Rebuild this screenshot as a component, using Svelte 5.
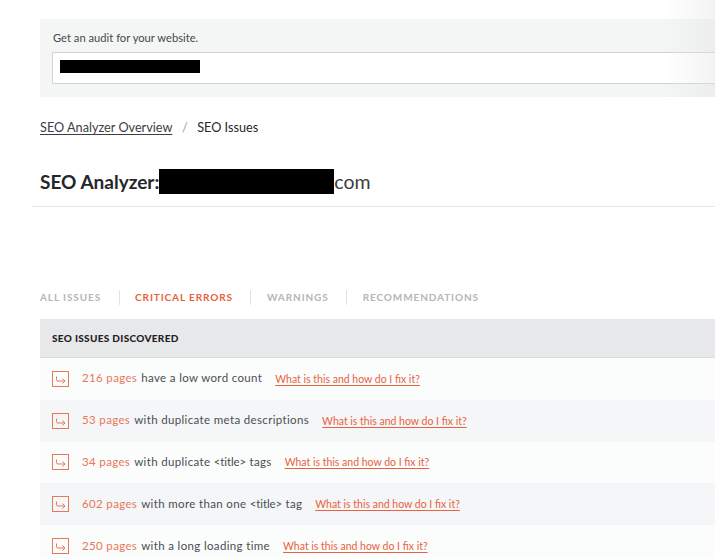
<script>
	let issues = [
		{ count: "216 pages", text: "have a low word count" },
		{ count: "53 pages", text: "with duplicate meta descriptions" },
		{ count: "34 pages", text: "with duplicate", tag: "<title>", after: "tags" },
		{ count: "602 pages", text: "with more than one", tag: "<title>", after: "tag" },
		{ count: "250 pages", text: "with a long loading time" }
	];
	let tabs = ["All Issues", "Critical Errors", "Warnings", "Recommendations"];
</script>

<style>
	:global(body) {
		margin: 0;
		background: #fff;
		overflow: hidden;
	}

	.page {
		width: 715px;
		height: 559px;
		overflow: hidden;
		position: relative;
		font-family: Lato, "Liberation Sans", sans-serif;
		color: #2b2f33;
		padding-top: 19px;
		box-sizing: border-box;
	}

	.shade {
		position: absolute;
		top: 0;
		right: 0;
		width: 50px;
		height: 97px;
		background: linear-gradient(to right, rgba(225, 225, 225, 0), rgba(225, 225, 225, 0.4));
	}

	.audit {
		margin-left: 40px;
		height: 78px;
		box-sizing: border-box;
		padding: 12px 0 0 12px;
		background: #f4f6f6;
	}

	.audit p {
		margin: 0 0 8px 1px;
		font-size: 11.2px;
		line-height: 13px;
		color: #45494d;
	}

	.field {
		height: 32px;
		box-sizing: border-box;
		background: #fff;
		border: 1px solid #d2d4d4;
		border-right: none;
		border-radius: 2px 0 0 2px;
		padding-top: 7px;
		padding-left: 7px;
	}

	.mask {
		display: block;
		background: #000;
	}

	.field .mask {
		width: 140px;
		height: 13px;
	}

	.crumbs {
		margin: 22px 0 0 40px;
		display: flex;
		align-items: center;
		height: 16px;
		font-size: 12.7px;
		color: #26292c;
	}

	.crumbs a {
		color: #3c4044;
		text-decoration: underline;
		text-underline-offset: 2px;
		text-decoration-thickness: 1px;
	}

	.crumbs .sep {
		color: #9a9d9f;
		margin: 0 9.5px;
	}

	.title {
		margin: 0 0 0 32px;
		padding: 34px 0 12px 8px;
		border-bottom: 1px solid #e6e7e7;
		display: flex;
		align-items: center;
		height: 25px;
		font-size: 19px;
		font-weight: 700;
		color: #24272a;
	}

	.title .mask {
		width: 175px;
		height: 25px;
	}

	.title .tld {
		font-weight: 400;
		font-size: 19.5px;
		color: #3a3d40;
	}

	.tabs {
		margin: 83px 0 0 40px;
		display: flex;
		align-items: center;
		height: 15px;
	}

	.tab {
		font-size: 10px;
		font-weight: 700;
		letter-spacing: 0.9px;
		text-transform: uppercase;
		color: #b4b6b8;
		padding-right: 17.5px;
		margin-right: 15.5px;
		border-right: 1px solid #e2e3e3;
		line-height: 15px;
	}

	.tab:last-child {
		border-right: none;
	}

	.tab.active {
		color: #e8603c;
	}

	.table {
		margin: 14px 0 0 40px;
	}

	.head {
		height: 39px;
		box-sizing: border-box;
		padding-left: 12px;
		display: flex;
		align-items: center;
		background: #e7e8e9;
		border-bottom: 1px solid #d9dadb;
		font-size: 10px;
		font-weight: 900;
		letter-spacing: 0.33px;
		text-transform: uppercase;
		color: #1f2225;
	}

	.row {
		height: 41.8px;
		box-sizing: border-box;
		padding: 0 0 2px 12px;
		display: flex;
		align-items: center;
		font-size: 11.5px;
		letter-spacing: 0.35px;
		color: #4a4e52;
		background: #fbfcfc;
	}

	.row:nth-child(odd) {
		background: #f5f6f7;
	}

	.icon {
		width: 17px;
		height: 16px;
		flex: none;
		margin: 2px 13px 0 0;
	}

	.count {
		color: #e8775a;
		margin-right: 4px;
	}

	.tag {
		letter-spacing: -0.1px;
	}

	.fix {
		margin: 2px 0 0 13px;
		color: #e8623f;
		letter-spacing: 0;
		font-size: 10.5px;
		text-decoration: underline;
		text-underline-offset: 2px;
	}
</style>

<div class="page">
	<div class="audit">
		<p>Get an audit for your website.</p>
		<div class="field"><span class="mask"></span></div>
	</div>

	<div class="crumbs">
		<a href="#overview">SEO Analyzer Overview</a>
		<span class="sep">/</span>
		<span>SEO Issues</span>
	</div>

	<h1 class="title">SEO Analyzer:<span class="mask"></span><span class="tld">com</span></h1>

	<div class="tabs">
		{#each tabs as tab, i}
			<span class="tab" class:active={i === 1}>{tab}</span>
		{/each}
	</div>

	<div class="table">
		<div class="head">SEO Issues Discovered</div>
		{#each issues as issue}
			<div class="row">
				<svg class="icon" viewBox="0 0 17 16" fill="none" stroke="#e8775a">
					<rect x="0.5" y="0.5" width="16" height="15" />
					<path d="M4.5 5.5v3q0 1.5 1.5 1.5h7M10.5 7.5l2.5 2.5-2.5 2.5" />
				</svg>
				<span class="count">{issue.count}</span>
				<span>{issue.text}{#if issue.tag}{" "}<span class="tag">{issue.tag}</span>{" "}{issue.after}{/if}</span>
				<a class="fix" href="#fix">What is this and how do I fix it?</a>
			</div>
		{/each}
	</div>

	<div class="shade"></div>
</div>
